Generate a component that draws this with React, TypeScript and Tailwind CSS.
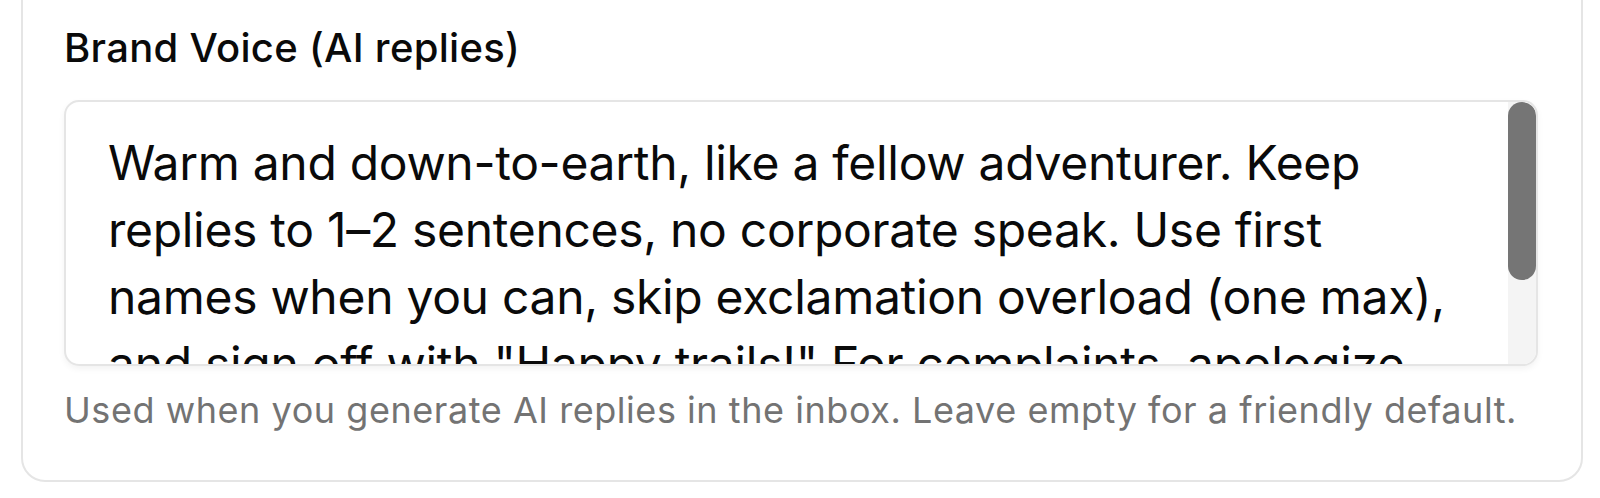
import { useState } from 'react';

const BRAND_VOICE =
  'Warm and down-to-earth, like a fellow adventurer. Keep replies to 1–2 sentences, no corporate speak. Use first names when you can, skip exclamation overload (one max), and sign off with "Happy trails!" For complaints, apologize once, own the problem and offer a concrete next step.';

/** 品牌语气设置卡片：标题 + 文本框 + 说明 */
export default function App() {
  const [voice, setVoice] = useState(BRAND_VOICE);

  return (
    <div className="h-[498px] overflow-hidden bg-white pl-[21px] pr-[17px] font-['Inter',sans-serif] antialiased">
      <section className="-mt-[25px] rounded-[24px] border-2 border-[#e5e5e5] bg-white pb-[45px] pl-[41px] pr-[43px] pt-[41px]">
        <label className="block">
          <span className="mb-[22px] block text-[40px] font-medium leading-[60px] tracking-[0.3px] text-[#0a0a0a]">
            Brand Voice (AI replies)
          </span>
          {/* 文本框：滚动条叠在右侧 */}
          <div className="relative h-[266px] overflow-hidden rounded-[15px] border-2 border-[#e5e5e5] bg-white shadow-[0_3px_6px_rgba(0,0,0,0.05)]">
            <textarea
              value={voice}
              onChange={(e) => setVoice(e.target.value)}
              className="block h-full w-full resize-none overflow-hidden bg-transparent pb-0 pl-[42px] pr-[70px] pt-[27px] text-[48px] leading-[67px] tracking-[-0.3px] text-[#0a0a0a] outline-none"
            />
            <div className="pointer-events-none absolute bottom-0 right-0 top-0 w-[28px] bg-[#f4f4f4]">
              <div className="h-[178px] rounded-full bg-[#757575]" />
            </div>
          </div>
        </label>
        <p className="mt-[19px] text-[36px] leading-[50px] tracking-[0.55px] text-[#737373]">
          Used when you generate AI replies in the inbox. Leave empty for a friendly default.
        </p>
      </section>
    </div>
  );
}
